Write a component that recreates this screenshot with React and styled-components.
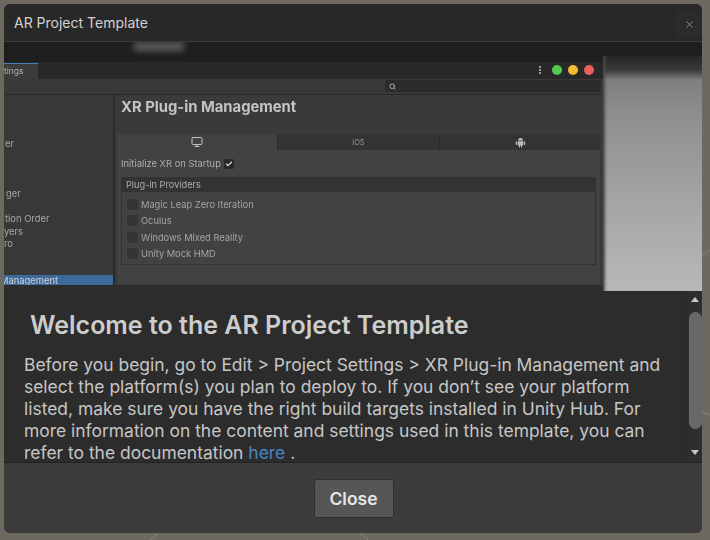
import React from "react";
import styled, { createGlobalStyle } from "styled-components";
import { Monitor, Search, Check, X } from "lucide-react";

const GlobalStyle = createGlobalStyle`
  html, body {
    margin: 0;
    padding: 0;
    background: #6d6860;
    font-family: "Inter", "Liberation Sans", sans-serif;
  }
`;

const Backdrop = styled.div`
  position: relative;
  width: 710px;
  height: 540px;
  padding: 4px 8px 7px 4px;
  box-sizing: border-box;
  overflow: hidden;
`;

const BackdropLines = styled.svg`
  position: absolute;
  inset: 0;
`;

const Dialog = styled.div`
  position: relative;
  height: 100%;
  display: flex;
  flex-direction: column;
  border-radius: 6px;
  overflow: hidden;
  background: #3c3c3c;
`;

const TitleBar = styled.header`
  height: 38px;
  flex: none;
  box-sizing: border-box;
  display: flex;
  align-items: center;
  justify-content: space-between;
  padding-left: 10px;
  background: #282828;
  border-bottom: 1px solid #3a3a3a;
`;

const Title = styled.div`
  color: #d2d2d2;
  font-size: 14px;
`;

const CloseX = styled.button`
  width: 26px;
  height: 26px;
  margin-top: 3px;
  padding: 0;
  border: 0;
  display: flex;
  align-items: center;
  justify-content: center;
  background: #2b2b2b;
  color: #b4b4b4;
`;

const Shot = styled.div`
  height: 249px;
  flex: none;
  display: flex;
  flex-direction: column;
  position: relative;
  overflow: hidden;
  background: #1e1e1e;
  filter: blur(0.6px);
`;

const Smudge = styled.div`
  position: absolute;
  left: 130px;
  top: 0;
  width: 50px;
  height: 9px;
  background: #5c5c5c;
  filter: blur(3px);
`;

const ShotSpacer = styled.div`
  height: 20px;
  flex: none;
`;

const ShotBody = styled.div`
  flex: 1;
  display: flex;
`;

const EditorWindow = styled.div`
  width: 599px;
  flex: none;
  display: flex;
  flex-direction: column;
  background: #2c2c2c;
`;

const GrayPhoto = styled.div`
  flex: 1;
  margin-top: -6px;
  background: linear-gradient(to bottom, #262626 0, #3a3a3a 14px, #7e7e7e 24px, #8f8f8f 60px, #a8a8a8 160px, #b8b8b8 100%);
  box-shadow: inset 4px 0 3px -2px #4a4a4a;
`;

const TabStrip = styled.div`
  height: 17px;
  flex: none;
  display: flex;
  align-items: stretch;
  justify-content: space-between;
  background: #282828;
`;

const WindowTab = styled.div`
  width: 34px;
  margin-top: 1px;
  background: #3c3c3c;
  border-top: 1px solid #4a7fb5;
  box-sizing: border-box;
  overflow: hidden;
  color: #b0b0b0;
  font-size: 8.5px;
  line-height: 15px;
  white-space: nowrap;
`;

const WindowControls = styled.div`
  display: flex;
  align-items: center;
  gap: 6px;
  padding: 0 9px 2px 0;
`;

const MenuDots = styled.div`
  width: 2px;
  height: 8px;
  margin-right: 5px;
  background: repeating-linear-gradient(to bottom, #999 0 2px, transparent 2px 3px);
`;

const Light = styled.span`
  width: 10px;
  height: 10px;
  border-radius: 50%;
  background: ${(p) => p.$color};
`;

const SearchRow = styled.div`
  height: 16px;
  flex: none;
  display: flex;
  justify-content: flex-end;
  align-items: center;
  padding: 0 2px 1px 0;
  background: #393939;
  border-bottom: 1px solid #2a2a2a;
  box-sizing: border-box;
`;

const SearchField = styled.div`
  width: 216px;
  height: 12px;
  display: flex;
  align-items: center;
  padding-left: 4px;
  box-sizing: border-box;
  border-radius: 3px;
  background: #2b2b2b;
  color: #bbb;
`;

const EditorBody = styled.div`
  height: 190px;
  flex: none;
  display: flex;
`;

const Sidebar = styled.nav`
  width: 109px;
  flex: none;
  overflow: hidden;
  background: #383838;
  border-right: 2px solid #2b2b2b;
  padding-top: 43px;
  color: #a8a8a8;
  font-size: 9.4px;
  line-height: 12.5px;
  white-space: nowrap;
`;

const SideItem = styled.div`
  height: 12.5px;
  margin-top: ${(p) => p.$gap || 0}px;
  padding-left: ${(p) => p.$indent || 0}px;
`;

const SideSelected = styled.div`
  height: 12px;
  margin-top: 24px;
  background: #3d699b;
  color: #d4d4d4;
  line-height: 12px;
  text-indent: -4px;
`;

const Inspector = styled.div`
  flex: 1;
  display: flex;
  flex-direction: column;
  padding: 0 3px 1px 2px;
  background: #3a3a3a;
`;

const InspectorTitle = styled.div`
  height: 39px;
  flex: none;
  padding: 3px 0 0 4px;
  box-sizing: border-box;
  color: #c4c4c4;
  font-size: 14.8px;
  font-weight: 700;
  line-height: 19px;
`;

const PlatformTabs = styled.div`
  height: 16px;
  flex: none;
  display: grid;
  grid-template-columns: 160px 162px 1fr;
`;

const PlatformTab = styled.div`
  display: flex;
  align-items: center;
  justify-content: center;
  background: ${(p) => (p.$active ? "#424242" : "#333")};
  border-left: ${(p) => (p.$active ? "0" : "1px solid #2b2b2b")};
  color: #9a9a9a;
  font-size: 7.5px;
`;

const AndroidGlyph = styled.svg`
  display: block;
`;

const PlatformPanel = styled.div`
  flex: 1;
  padding: 0 4px;
  background: #424242;
`;

const InitRow = styled.div`
  height: 27px;
  display: flex;
  align-items: center;
  gap: 3px;
  color: #adadad;
  font-size: 9.4px;
`;

const TickBox = styled.span`
  width: 10px;
  height: 10px;
  display: flex;
  align-items: center;
  justify-content: center;
  border-radius: 2px;
  background: #272727;
  color: #e6e6e6;
`;

const ProviderHead = styled.div`
  height: 15px;
  padding-left: 5px;
  background: #333;
  border-radius: 2px 2px 0 0;
  color: #adadad;
  font-size: 9.2px;
  line-height: 15px;
`;

const ProviderList = styled.div`
  height: 73px;
  padding: 4px 0 0 5px;
  box-sizing: border-box;
  border: 1px solid #333;
  border-top: 0;
  display: grid;
  grid-auto-rows: 16.5px;
`;

const ProviderRow = styled.div`
  display: flex;
  align-items: center;
  gap: 3px;
  color: #a4a4a4;
  font-size: 9.3px;
`;

const EmptyBox = styled.span`
  width: 11px;
  height: 11px;
  border-radius: 2px;
  background: #353535;
`;

const Welcome = styled.section`
  height: 172px;
  flex: none;
  display: flex;
  background: #2c2c2c;
  border-bottom: 1px solid #222;
  box-sizing: border-box;
`;

const WelcomeText = styled.div`
  flex: 1;
  overflow: hidden;
  padding: 17px 16px 0 20px;
  color: #c6c6c6;
`;

const Heading = styled.h1`
  margin: 0 0 12px 6px;
  color: #cdcdcd;
  font-size: 25px;
  font-weight: 600;
  line-height: 34px;
  white-space: nowrap;
`;

const Body = styled.p`
  margin: 0;
  font-size: 17.45px;
  line-height: 22px;
`;

const Line = styled.span`
  display: block;
  white-space: nowrap;
`;

const DocLink = styled.a`
  color: #4b83c1;
`;

const ScrollTrack = styled.div`
  width: 15px;
  flex: none;
  display: flex;
  flex-direction: column;
  align-items: center;
  background: #2e2e2e;
  border-left: 1px solid #292929;
  box-sizing: border-box;
`;

const Arrow = styled.span`
  width: 0;
  height: 0;
  margin: ${(p) => (p.$down ? "6px 0 5px" : "6px 0 10px")};
  border-left: 4px solid transparent;
  border-right: 4px solid transparent;
  ${(p) => (p.$down ? "border-top: 5px solid #c8c8c8;" : "border-bottom: 5px solid #c8c8c8;")}
`;

const Thumb = styled.div`
  width: 13px;
  height: 117px;
  margin-bottom: 15px;
  border-radius: 7px;
  background: #686868;
`;

const Footer = styled.footer`
  flex: 1;
  display: flex;
  align-items: flex-start;
  justify-content: center;
  padding: 16px 0 0 1px;
  background: #3c3c3c;
`;

const CloseButton = styled.button`
  width: 80px;
  height: 39px;
  border: 1px solid #2f2f2f;
  border-radius: 3px;
  background: #565656;
  color: #e6e6e6;
  font-family: inherit;
  font-size: 17.5px;
  font-weight: 600;
`;

const providers = ["Magic Leap Zero Iteration", "Oculus", "Windows Mixed Reality", "Unity Mock HMD"];

const App = () => {
  return (
    <Backdrop>
      <GlobalStyle />
      <BackdropLines width="710" height="540">
        <path d="M150 540L160 532M360 532L368 540M702 255L710 250M702 412L710 415" stroke="#8a857d" fill="none" />
      </BackdropLines>
      <Dialog>
        <TitleBar>
          <Title>AR Project Template</Title>
          <CloseX aria-label="Close window">
            <X size={11} strokeWidth={1.5} />
          </CloseX>
        </TitleBar>
        <Shot>
          <Smudge />
          <ShotSpacer />
          <ShotBody>
            <EditorWindow>
              <TabStrip>
                <WindowTab>tings</WindowTab>
                <WindowControls>
                  <MenuDots />
                  <Light $color="#55c94f" />
                  <Light $color="#f2bb33" />
                  <Light $color="#ee5f5b" />
                </WindowControls>
              </TabStrip>
              <SearchRow>
                <SearchField>
                  <Search size={7} strokeWidth={3} />
                </SearchField>
              </SearchRow>
              <EditorBody>
                <Sidebar>
                  <SideItem $indent={1}>er</SideItem>
                  <SideItem $gap={37} $indent={2}>ger</SideItem>
                  <SideItem $gap={13} $indent={1}>tion Order</SideItem>
                  <SideItem>yers</SideItem>
                  <SideItem>ro</SideItem>
                  <SideSelected>Management</SideSelected>
                </Sidebar>
                <Inspector>
                  <InspectorTitle>XR Plug-in Management</InspectorTitle>
                  <PlatformTabs>
                    <PlatformTab $active>
                      <Monitor size={12} strokeWidth={2} color="#c4c4c4" />
                    </PlatformTab>
                    <PlatformTab>iOS</PlatformTab>
                    <PlatformTab>
                      <AndroidGlyph width="11" height="11" viewBox="0 0 11 11">
                        <path d="M3 3.4a2.5 2.5 0 0 1 5 0z" fill="#bdbdbd" />
                        <path d="M3 4.2h5v4.3H7v2H6V8.5H5v2H4v-2H3z" fill="#bdbdbd" />
                        <rect x="0.8" y="4.2" width="1.6" height="3.8" rx="0.8" fill="#bdbdbd" />
                        <rect x="8.6" y="4.2" width="1.6" height="3.8" rx="0.8" fill="#bdbdbd" />
                      </AndroidGlyph>
                    </PlatformTab>
                  </PlatformTabs>
                  <PlatformPanel>
                    <InitRow>
                      Initialize XR on Startup
                      <TickBox>
                        <Check size={8} strokeWidth={3.5} />
                      </TickBox>
                    </InitRow>
                    <ProviderHead>Plug-in Providers</ProviderHead>
                    <ProviderList>
                      {providers.map((name) => (
                        <ProviderRow key={name}>
                          <EmptyBox />
                          {name}
                        </ProviderRow>
                      ))}
                    </ProviderList>
                  </PlatformPanel>
                </Inspector>
              </EditorBody>
            </EditorWindow>
            <GrayPhoto />
          </ShotBody>
        </Shot>
        <Welcome>
          <WelcomeText>
            <Heading>Welcome to the AR Project Template</Heading>
            <Body>
              <Line>Before you begin, go to Edit &gt; Project Settings &gt; XR Plug-in Management and</Line>
              <Line>select the platform(s) you plan to deploy to. If you don’t see your platform</Line>
              <Line>listed, make sure you have the right build targets installed in Unity Hub. For</Line>
              <Line>more information on the content and settings used in this template, you can</Line>
              <Line>
                refer to the documentation <DocLink>here</DocLink> .
              </Line>
            </Body>
          </WelcomeText>
          <ScrollTrack>
            <Arrow />
            <Thumb />
            <Arrow $down />
          </ScrollTrack>
        </Welcome>
        <Footer>
          <CloseButton>Close</CloseButton>
        </Footer>
      </Dialog>
    </Backdrop>
  );
};

export default App;
